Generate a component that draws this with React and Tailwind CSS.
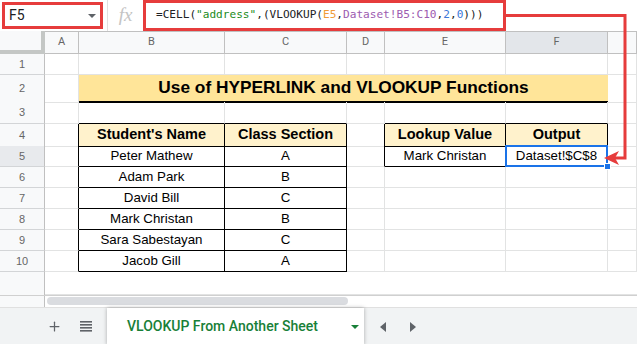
import React from 'react';
import { Plus } from 'lucide-react';

const GRID = 'grid grid-cols-[45px_34px_146px_122px_38px_121px_102px_29px]';

// one spreadsheet cell; r / b switch the right / bottom edge to a black table border
function Cell({ r, b, bg = '', className = '', children }) {
  return (
    <div
      className={`flex items-center justify-center overflow-visible whitespace-nowrap border-r border-b ${
        r ? 'border-r-black' : 'border-r-[#e2e3e3]'
      } ${b ? 'border-b-black' : 'border-b-[#e2e3e3]'} ${bg} ${className}`}
    >
      {children}
    </div>
  );
}

function RowHead({ n, active }) {
  return (
    <div
      className={`flex items-center justify-center border-r border-b border-r-[#c0c0c0] border-b-[#d3d5d7] text-[11px] text-[#666] ${
        active ? 'bg-[#e8eaed]' : 'bg-[#f8f9fa]'
      }`}
    >
      {n}
    </div>
  );
}

const students = [
  ['Peter Mathew', 'A'],
  ['Adam Park', 'B'],
  ['David Bill', 'C'],
  ['Mark Christan', 'B'],
  ['Sara Sabestayan', 'C'],
  ['Jacob Gill', 'A'],
];

const head = 'bg-[#fff2cc] font-bold text-[14.5px]';

export default function App() {
  return (
    <div className="relative w-[637px] h-[344px] overflow-hidden bg-white font-['Liberation_Sans',Arial,sans-serif] text-black">
      {/* formula bar */}
      <div className="flex h-[31px] items-start">
        <div className="ml-[2px] mt-[2px] flex h-[27px] w-[101px] items-center justify-between border-[3px] border-[#e63c3c] pl-[4px] pr-[4px] font-['Roboto',sans-serif] text-[14px] text-[#202124]">
          <span>F5</span>
          <svg width="8" height="4" viewBox="0 0 8 4">
            <polygon points="0,0 8,0 4,4" fill="#5f6368" />
          </svg>
        </div>
        <div className="ml-[4px] h-[31px] w-px bg-[#e0e0e0]" />
        <div className="flex h-[31px] w-[35px] items-center justify-center font-['Liberation_Serif',serif] text-[19px] italic text-[#c4c4c4]">
          fx
        </div>
        <div className="flex h-[31px] w-[363px] items-center border-[3px] border-[#e63c3c] pl-[10px] font-['DejaVu_Sans_Mono',monospace] text-[11.1px] text-[#202124]">
          <span>=CELL(</span>
          <span className="text-[#228b22]">"address"</span>
          <span>,(VLOOKUP(</span>
          <span className="text-[#f09c38]">E5</span>
          <span>,</span>
          <span className="text-[#9c5bb0]">Dataset!B5:C10</span>
          <span>,</span>
          <span className="text-[#3c78d8]">2</span>
          <span>,</span>
          <span className="text-[#3c78d8]">0</span>
          <span>)))</span>
        </div>
      </div>

      {/* column headers */}
      <div className={`${GRID} h-[23px] font-['Roboto',sans-serif] text-[11px] text-[#666]`}>
        <div className="border-r-[4px] border-b-[4px] border-[#c4c7c5] bg-[#f8f9fa]" />
        {['A', 'B', 'C', 'D', 'E', 'F', ''].map((c) => (
          <div
            key={c || 'G'}
            className={`flex items-center justify-center border-t border-r border-b border-[#c0c0c0] ${
              c === 'F' ? 'bg-[#e3e6ea]' : 'bg-[#f8f9fa]'
            }`}
          >
            {c}
          </div>
        ))}
      </div>

      {/* row 1 */}
      <div className={`${GRID} h-[21px]`}>
        <RowHead n={1} />
        <Cell /><Cell /><Cell /><Cell /><Cell /><Cell /><Cell />
      </div>

      {/* row 2 - title */}
      <div className={`${GRID} h-[27px]`}>
        <RowHead n={2} />
        <Cell />
        <div className="col-span-5 flex items-center justify-center border-b-2 border-black bg-[#ffe599] text-[17.3px] font-bold">
          Use of HYPERLINK and VLOOKUP Functions
        </div>
        <Cell />
      </div>

      {/* row 3 */}
      <div className={`${GRID} h-[22px]`}>
        <RowHead n={3} />
        <Cell /><Cell b /><Cell b /><Cell /><Cell b /><Cell b /><Cell />
      </div>

      {/* row 4 - table headers */}
      <div className={`${GRID} h-[22px]`}>
        <RowHead n={4} />
        <Cell r />
        <Cell r b bg={head}>Student's Name</Cell>
        <Cell r b bg={head}>Class Section</Cell>
        <Cell r />
        <Cell r b bg={head}>Lookup Value</Cell>
        <Cell r b bg={head}>Output</Cell>
        <Cell />
      </div>

      {/* rows 5-10 */}
      {students.map(([name, sec], i) => (
        <div key={name} className={`${GRID} h-[21px] text-[13.3px]`}>
          <RowHead n={i + 5} active={i === 0} />
          <Cell r />
          <Cell r b>{name}</Cell>
          <Cell r b>{sec}</Cell>
          {i === 0 ? (
            <>
              <Cell r />
              <Cell r b>Mark Christan</Cell>
              <Cell r b className="relative">
                Dataset!$C$8
                <div className="absolute -left-[1px] -top-[1px] -right-[1px] -bottom-[1px] border-2 border-[#1a73e8]" />
                <div className="absolute -right-[4px] -bottom-[4px] h-[7px] w-[7px] border border-white bg-[#1a73e8]" />
              </Cell>
            </>
          ) : (
            <>
              <Cell /><Cell /><Cell />
            </>
          )}
          <Cell />
        </div>
      ))}

      {/* row 11 */}
      <div className={`${GRID} h-[23px]`}>
        <div className="border-r border-[#c0c0c0] bg-[#f8f9fa]" />
        <div className="col-span-7 border-b border-[#e2e3e3]" />
      </div>

      {/* horizontal scrollbar */}
      <div className="flex h-[12px] border-t border-[#d0d0d0]">
        <div className="w-[45px] border-r border-[#c0c0c0] bg-[#f8f9fa]" />
        <div className="flex-1 px-[2px] pt-[1px]">
          <div className="h-[8px] w-[301px] rounded-full bg-[#dadce0]" />
        </div>
      </div>

      {/* sheet tabs */}
      <div className="flex h-[38px] items-stretch border-t border-[#e0e0e0] bg-[#f1f3f4]">
        <div className="flex w-[107px] items-center">
          <Plus size={15} strokeWidth={2} color="#5f6368" className="ml-[47px]" />
          <svg width="12" height="11" viewBox="0 0 12 11" className="ml-[18px]">
            <rect x="0" y="0" width="12" height="1.6" fill="#5f6368" />
            <rect x="0" y="3" width="12" height="1.6" fill="#5f6368" />
            <rect x="0" y="6" width="12" height="1.6" fill="#5f6368" />
            <rect x="0" y="9" width="12" height="1.6" fill="#5f6368" />
          </svg>
        </div>
        <div className="flex w-[257px] items-center bg-white pl-[20px] pr-[5px] font-['Roboto',sans-serif] text-[14px] font-medium text-[#188038] shadow-[0_0_4px_rgba(0,0,0,0.3)]">
          <span className="flex-1">VLOOKUP From Another Sheet</span>
          <svg width="8" height="4" viewBox="0 0 8 4">
            <polygon points="0,0 8,0 4,4" fill="#188038" />
          </svg>
        </div>
        <div className="flex items-center pl-[16px]">
          <svg width="6" height="10" viewBox="0 0 6 10">
            <polygon points="6,0 6,10 0,5" fill="#5f6368" />
          </svg>
          <svg width="6" height="10" viewBox="0 0 6 10" className="ml-[24px]">
            <polygon points="0,0 0,10 6,5" fill="#5f6368" />
          </svg>
        </div>
      </div>

      {/* red callout arrow */}
      <svg className="pointer-events-none absolute left-0 top-0" width="637" height="344">
        <polyline points="505,15.5 625,15.5 625,158 612,158" fill="none" stroke="#e63c3c" strokeWidth="3" />
        <polygon points="604,158 619,151 615,158 619,165" fill="#e63c3c" />
      </svg>
    </div>
  );
}
